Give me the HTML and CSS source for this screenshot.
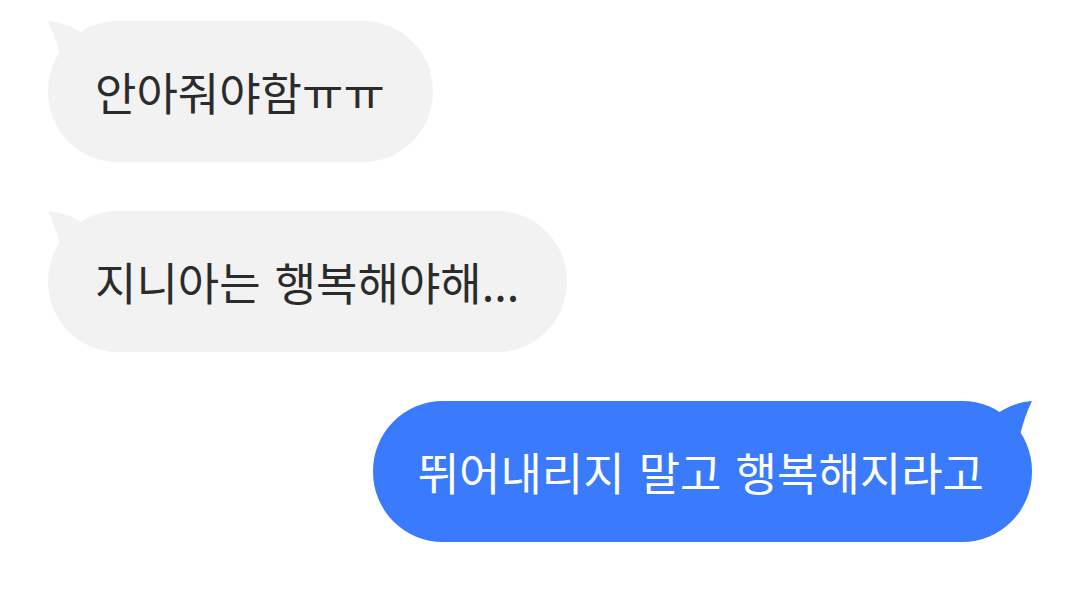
FILE: index.html
```html
<!DOCTYPE html>
<html>
<head>
    <title>대화</title>
    <link rel="stylesheet" href="styles.css">
</head>
<body>
    <div class="chat">
        <div class="bubble received">
            <svg class="tail" width="36" height="36" viewBox="0 0 36 36"><path d="M0,0 Q18,1 34,12 L30,30 L12,34 Q7,14 0,0 Z"/></svg>
            <span class="text">안아줘야함ㅠㅠ</span>
        </div>
        <div class="bubble received">
            <svg class="tail" width="36" height="36" viewBox="0 0 36 36"><path d="M0,0 Q18,1 34,12 L30,30 L12,34 Q7,14 0,0 Z"/></svg>
            <span class="text">지니아는 행복해야해...</span>
        </div>
        <div class="bubble sent">
            <svg class="tail" width="36" height="36" viewBox="0 0 36 36"><path d="M36,0 Q18,1 2,12 L6,30 L24,34 Q29,14 36,0 Z"/></svg>
            <span class="text">뛰어내리지 말고 행복해지라고</span>
        </div>
    </div>
</body>
</html>
```

FILE: styles.css
```css
body {
    margin: 0;
    background-color: #ffffff;
    font-family: "Noto Sans CJK KR", "Noto Sans", sans-serif;
}

.chat {
    display: flex;
    flex-direction: column;
    gap: 49px;
    padding: 21px 48px 0 48px;
}

.bubble {
    position: relative;
    display: flex;
    align-items: center;
    height: 141px;
    padding: 0 48px 0 47px;
    border-radius: 70px;
    font-size: 45px;
    line-height: 1;
    word-spacing: 4px;
}

.bubble .text {
    position: relative;
}

.received {
    align-self: flex-start;
    background-color: #f2f2f2;
    color: #2b2b2b;
}

.received .tail {
    position: absolute;
    left: 0;
    top: 0;
    fill: #f2f2f2;
}

.sent {
    align-self: flex-end;
    padding: 0 48px 0 45px;
    background-color: #3a7bfd;
    color: #ffffff;
}

.sent .tail {
    position: absolute;
    right: 0;
    top: 0;
    fill: #3a7bfd;
}
```
